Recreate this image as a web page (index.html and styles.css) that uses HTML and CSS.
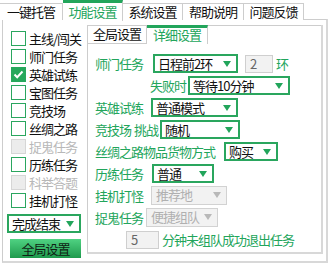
FILE: index.html
```html
<!DOCTYPE html>
<html lang="zh">
<head>
    <meta charset="UTF-8">
    <title>功能设置</title>
    <link rel="stylesheet" href="styles.css">
</head>
<body>

<div class="window">
    <div class="tabs">
        <div class="tab first">一键托管</div>
        <div class="tab active">功能设置</div>
        <div class="tab">系统设置</div>
        <div class="tab wide">帮助说明</div>
        <div class="tab">问题反馈</div>
    </div>

    <div class="panel">
        <div class="side">
            <div class="task"><span class="box"></span>主线/闯关</div>
            <div class="task"><span class="box"></span>师门任务</div>
            <div class="task"><span class="box checked">
                <svg width="13" height="13" viewBox="0 0 13 13"><path d="M2.5 6.5 L5.2 9.2 L10.5 3.5" fill="none" stroke="#fff" stroke-width="2"/></svg>
            </span>英雄试练</div>
            <div class="task"><span class="box"></span>宝图任务</div>
            <div class="task"><span class="box"></span>竞技场</div>
            <div class="task"><span class="box"></span>丝绸之路</div>
            <div class="task off"><span class="box"></span>捉鬼任务</div>
            <div class="task"><span class="box"></span>历练任务</div>
            <div class="task off"><span class="box"></span>科举答题</div>
            <div class="task"><span class="box"></span>挂机打怪</div>

            <div class="select finish">完成结束</div>
            <button class="global-btn">全局设置</button>
        </div>

        <div class="detail">
            <div class="subtabs">
                <div class="subtab">全局设置</div>
                <div class="subtab active">详细设置</div>
                <div class="subtab-fill"></div>
            </div>

            <div class="form">
                <div class="row">
                    <span class="label">师门任务</span>
                    <div class="select sel-shimen">日程前2环</div>
                    <div class="field field-rounds">2</div>
                    <span class="label unit">环</span>
                </div>
                <div class="row indent-fail">
                    <span class="label">失败时</span>
                    <div class="select sel-fail">等待10分钟</div>
                </div>
                <div class="row">
                    <span class="label">英雄试练</span>
                    <div class="select sel-hero">普通模式</div>
                </div>
                <div class="row">
                    <span class="label">竞技场</span>
                    <span class="label word">挑战</span>
                    <div class="select sel-arena">随机</div>
                </div>
                <div class="row">
                    <span class="label">丝绸之路物品货物方式</span>
                    <div class="select sel-silk">购买</div>
                </div>
                <div class="row">
                    <span class="label">历练任务</span>
                    <div class="select sel-train">普通</div>
                </div>
                <div class="row">
                    <span class="label">挂机打怪</span>
                    <div class="select disabled sel-idle">推荐地</div>
                </div>
                <div class="row">
                    <span class="label">捉鬼任务</span>
                    <div class="select disabled sel-ghost">便捷组队</div>
                </div>
                <div class="row indent-quit">
                    <div class="field field-minutes">5</div>
                    <span class="label unit">分钟未组队成功退出任务</span>
                </div>
            </div>
        </div>
    </div>
</div>

</body>
</html>
```

FILE: styles.css
```css
/* window layout */
* {
    box-sizing: border-box;
}
body {
    margin: 0;
    background: #fff;
    font-family: "Noto Sans CJK SC", "Noto Sans", sans-serif;
    font-size: 13px;
    letter-spacing: -1px;
    color: #111;
}
.window {
    width: 330px;
    height: 268px;
}

/* top tabs */
.tabs {
    display: flex;
    height: 20px;
}
.tab {
    width: 60px;
    height: 17px;
    margin-top: 3px;
    border-top: 1px solid #cdcdcd;
    border-right: 1px solid #cdcdcd;
    background: #fff;
    text-align: center;
    line-height: 15px;
}
.tab.first {
    width: 63px;
}
.tab.wide {
    width: 61px;
}
.tab.active {
    position: relative;
    z-index: 1;
    height: 21px;
    margin-top: 0;
    border-top: 3px solid #22a55b;
    color: #22a55b;
    line-height: 17px;
}

/* main panel */
.panel {
    display: flex;
    width: 326px;
    height: 244px;
    margin: -1px 0 0 2px;
    border: 1px solid #cdcdcd;
    border-right: 2px solid #d8d8d8;
    border-bottom: 2px solid #d8d8d8;
}

/* left task list */
.side {
    width: 84px;
    padding: 11px 0 0 8px;
}
.task {
    display: flex;
    align-items: center;
    height: 18px;
    line-height: 15px;
    padding-bottom: 3px;
}
.box {
    width: 15px;
    height: 15px;
    margin-right: 3px;
    border: 1px solid #2aa65e;
    background: #fff;
    display: flex;
    align-items: center;
    justify-content: center;
}
.box.checked {
    background: #27a85c;
    border-color: #27a85c;
}
.task.off {
    color: #b8b8b8;
}
.task.off .box {
    background: #ececec;
    border-color: #d6d6d6;
}

/* dropdowns */
.select {
    position: relative;
    height: 19px;
    border: 2px solid #2aa65e;
    background: #fff;
    padding-left: 3px;
    line-height: 15px;
    color: #111;
}
.select::after {
    content: "";
    position: absolute;
    right: 5px;
    top: 5px;
    border-left: 4px solid transparent;
    border-right: 4px solid transparent;
    border-top: 6px solid #22a55b;
}
.select.disabled {
    border: 1px solid #d2d2d2;
    background: #f2f2f2;
    color: #b0b0b0;
    padding-left: 4px;
    line-height: 16px;
}
.select.disabled::after {
    border-top-color: #b8b8b8;
}
.finish {
    width: 74px;
    margin: 3px 0 0 -4px;
}
.global-btn {
    display: block;
    width: 71px;
    height: 19px;
    margin: 6px 0 0 -1px;
    padding: 0;
    border: none;
    background: linear-gradient(#4fd282, #1f9a4d);
    font-family: inherit;
    font-size: 13px;
    letter-spacing: -1px;
    color: #0f1f14;
    line-height: 19px;
}

/* detail panel */
.detail {
    width: 236px;
    height: 229px;
    margin-top: 5px;
    border-left: 1px solid #cdcdcd;
    border-right: 2px solid #d8d8d8;
    border-bottom: 2px solid #d8d8d8;
}
.subtabs {
    display: flex;
    height: 19px;
}
.subtab {
    width: 59px;
    border-top: 1px solid #cdcdcd;
    border-right: 1px solid #cdcdcd;
    border-bottom: 1px solid #cdcdcd;
    text-align: center;
    line-height: 16px;
}
.subtab.active {
    width: 61px;
    border-top: 3px solid #22a55b;
    border-bottom: none;
    color: #22a55b;
    line-height: 14px;
}
.subtab-fill {
    flex: 1;
    border-top: 1px solid #cdcdcd;
}

.form {
    display: flex;
    flex-direction: column;
    gap: 3px;
    padding: 10px 0 0 7px;
}
.row {
    display: flex;
    align-items: center;
    height: 19px;
}
.label {
    color: #22a55b;
    white-space: nowrap;
}
.label.word {
    margin-left: 3px;
}
.unit {
    margin-left: 3px;
}
.indent-fail {
    padding-left: 55px;
}
.indent-quit {
    padding-left: 31px;
}

.field {
    height: 18px;
    border: 1px solid #cfcfcf;
    background: #f2f2f2;
    color: #666;
    padding-left: 4px;
    line-height: 16px;
}
.field-rounds {
    width: 28px;
    margin-left: 7px;
}
.field-minutes {
    width: 33px;
}

.sel-shimen { width: 85px; margin-left: 10px; }
.sel-fail { width: 102px; margin-left: 2px; }
.sel-hero { width: 87px; margin-left: 8px; }
.sel-arena { width: 80px; margin-left: 2px; }
.sel-silk { width: 54px; margin-left: 9px; }
.sel-train { width: 62px; margin-left: 9px; }
.sel-idle { width: 76px; margin-left: 8px; }
.sel-ghost { width: 72px; margin-left: 3px; }
```
